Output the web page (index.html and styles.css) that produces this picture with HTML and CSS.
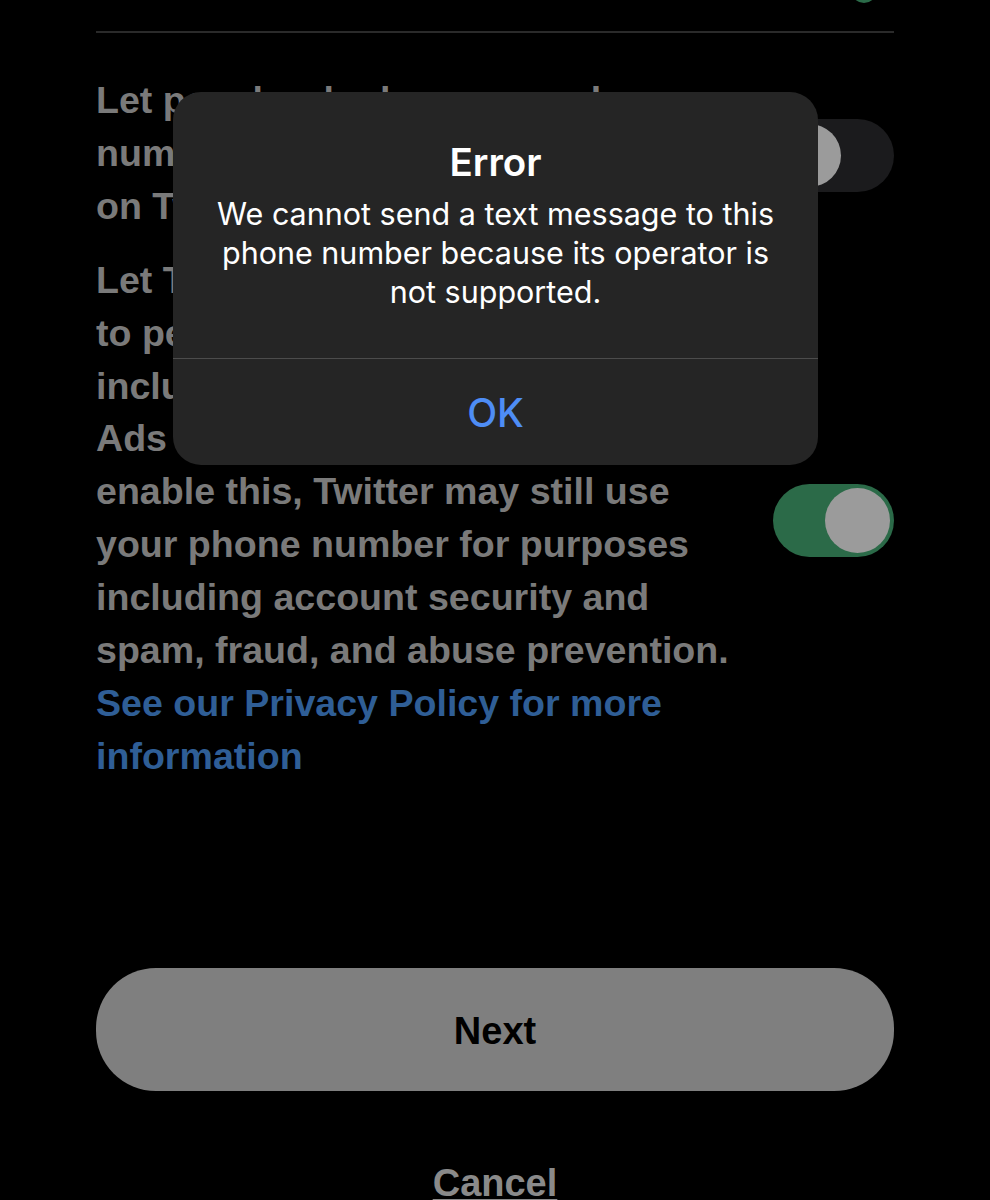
FILE: index.html
```html
<!DOCTYPE html>
<html lang="en">
<head>
<meta charset="utf-8">
<title>Error</title>
<link rel="stylesheet" href="styles.css">
</head>
<body>
<div class="screen">
  <div class="prev-knob"></div>
  <div class="divider"></div>

  <div class="setting first">
    <p class="setting-text">Let people who have your phone<br>number find and connect with you<br>on Twitter.</p>
    <div class="toggle off"><span class="knob"></span></div>
  </div>

  <div class="setting second">
    <p class="setting-text">Let Twitter use your phone number<br>to personalize content and ads,<br>including content in ads on Twitter<br>Ads (if enabled). If you don't<br>enable this, Twitter may still use<br>your phone number for purposes<br>including account security and<br>spam, fraud, and abuse prevention.<br><a class="link" href="#">See our Privacy Policy for more<br>information</a></p>
    <div class="toggle on"><span class="knob"></span></div>
  </div>

  <button class="next-btn">Next</button>
  <div class="cancel-wrap"><a class="cancel" href="#">Cancel</a></div>
</div>

<div class="alert">
  <div class="alert-body">
    <div class="alert-title">Error</div>
    <div class="alert-msg">We cannot send a text message to this phone number because its operator is not supported.</div>
  </div>
  <div class="alert-action">OK</div>
</div>
</body>
</html>
```
FILE: styles.css
```css
html, body {
  margin: 0;
  padding: 0;
  background: #000;
}
body {
  width: 990px;
  height: 1200px;
  overflow: hidden;
  position: relative;
  font-family: "Liberation Sans", Arial, sans-serif;
}
.screen {
  padding: 0 96px;
}
.prev-knob {
  width: 26px;
  height: 26px;
  border-radius: 50%;
  background: #2b6b49;
  margin-top: -23px;
  margin-left: auto;
  margin-right: 17px;
}
.divider {
  height: 2px;
  background: #2a2a2a;
  margin-top: 28px;
}
.setting {
  display: flex;
  align-items: center;
  justify-content: space-between;
}
.setting.first {
  margin-top: 41px;
}
.setting.second {
  margin-top: 21px;
}
.setting-text {
  margin: 0;
  font-size: 37.6px;
  line-height: 52.9px;
  font-weight: 700;
  color: #7a7a7a;
  white-space: nowrap;
}
.link {
  color: #2f5e96;
  text-decoration: none;
}
.toggle {
  width: 121px;
  height: 73px;
  border-radius: 37px;
  box-sizing: border-box;
  padding: 5px;
  display: flex;
  flex-shrink: 0;
}
.toggle.off {
  background: #1b1b1d;
  justify-content: flex-start;
  margin-top: 4px;
}
.toggle.on {
  background: #2b6a48;
  justify-content: flex-end;
  padding: 4px;
  margin-top: 4px;
}
.knob {
  width: 63px;
  height: 63px;
  border-radius: 50%;
  background: #9b9b9b;
}
.toggle.on .knob {
  width: 65px;
  height: 65px;
}
.next-btn {
  display: flex;
  align-items: center;
  justify-content: center;
  width: 100%;
  height: 123px;
  margin-top: 185px;
  border: none;
  border-radius: 60px;
  background: #7f7f7f;
  color: #000;
  font-family: "Liberation Sans", Arial, sans-serif;
  font-weight: 700;
  font-size: 38px;
  padding: 0 0 0;
  padding-top: 4px;
}
.cancel-wrap {
  margin-top: 70px;
  text-align: center;
  line-height: 44px;
}
.cancel {
  font-size: 38px;
  font-weight: 700;
  color: #8a8a8a;
  text-decoration: underline;
  text-underline-offset: 3px;
  text-decoration-thickness: 3px;
}

/* iOS alert overlay */
.alert {
  position: absolute;
  left: 173px;
  top: 92px;
  width: 645px;
  height: 373px;
  border-radius: 28px;
  background: #252525;
  display: flex;
  flex-direction: column;
  font-family: Inter, "Noto Sans", sans-serif;
  color: #fff;
  overflow: hidden;
}
.alert-body {
  height: 267px;
  box-sizing: border-box;
  padding: 48px 40px 0;
  text-align: center;
  border-bottom: 1px solid #4c4c4c;
}
.alert-title {
  font-size: 38.5px;
  line-height: 44px;
  font-weight: 600;
}
.alert-msg {
  margin-top: 10px;
  font-size: 30.5px;
  line-height: 39px;
  font-weight: 400;
}
.alert-action {
  flex: 1;
  display: flex;
  align-items: center;
  justify-content: center;
  font-size: 39px;
  font-weight: 500;
  color: #4e8df5;
}
```
